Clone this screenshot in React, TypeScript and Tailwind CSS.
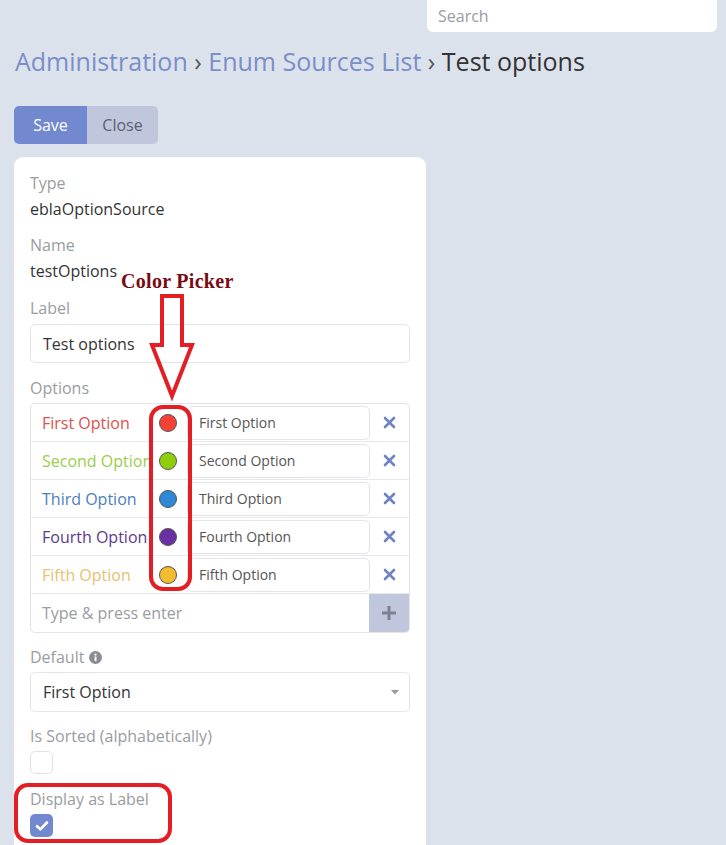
import React from "react";

const options = [
  { label: "First Option", text: "text-[#e0504f]", dot: "bg-[#f44336]" },
  { label: "Second Option", text: "text-[#9acd4a]", dot: "bg-[#8fce0c]" },
  { label: "Third Option", text: "text-[#4a80c0]", dot: "bg-[#2d88d6]" },
  { label: "Fourth Option", text: "text-[#5a3a90]", dot: "bg-[#6a2fa0]" },
  { label: "Fifth Option", text: "text-[#e8c070]", dot: "bg-[#f4bc2f]" },
];

function Label({ children }: { children: React.ReactNode }) {
  return <div className="text-[16px] leading-[22px] text-[#9a9ca1] mb-[4px]">{children}</div>;
}

export default function App() {
  return (
    <div
      className="relative w-[726px] h-[845px] overflow-hidden bg-[#dbe2ec]"
      style={{ fontFamily: '"Open Sans", sans-serif' }}
    >
      <div className="flex justify-end pr-[9px]">
        <div className="w-[290px] h-[32px] bg-white rounded-b-[6px] flex items-center pl-[11px] text-[16px] text-[#9a9ca1]">
          Search
        </div>
      </div>

      <div className="pl-[15px] mt-[13px] text-[25px] leading-[33px] text-[#333] whitespace-nowrap">
        <span className="text-[#7a8ec8]">Administration</span>
        <span className="text-[#555]"> › </span>
        <span className="text-[#7a8ec8]">Enum Sources List</span>
        <span className="text-[#555]"> › </span>
        <span>Test options</span>
      </div>

      <div className="pl-[14px] mt-[28px] flex">
        <div className="w-[73px] h-[38px] bg-[#7389cf] text-white text-[16px] flex items-center justify-center rounded-l-[5px]">
          Save
        </div>
        <div className="w-[71px] h-[38px] bg-[#c0c7dd] text-[#5c6170] text-[16px] flex items-center justify-center rounded-r-[5px]">
          Close
        </div>
      </div>

      <div className="ml-[14px] mt-[13px] w-[412px] h-[720px] bg-white rounded-[9px] pt-[15px] px-[16px]">
        <div className="mb-[14px]">
          <Label>Type</Label>
          <div className="text-[16px] leading-[22px] text-[#333]">eblaOptionSource</div>
        </div>
        <div className="mb-[15px]">
          <Label>Name</Label>
          <div className="text-[16px] leading-[22px] text-[#333]">testOptions</div>
        </div>
        <div className="mb-[14px]">
          <div className="text-[16px] leading-[22px] text-[#9a9ca1] mb-[5px]">Label</div>
          <div className="h-[39px] border border-[#e2e4ea] rounded-[5px] flex items-center pl-[12px] text-[16px] text-[#333]">
            Test options
          </div>
        </div>
        <div className="mb-[13px]">
          <Label>Options</Label>
          <div className="border border-[#e2e4ea] rounded-[5px] overflow-hidden">
            {options.map((o) => (
              <div key={o.label} className="h-[38px] flex items-center border-b border-[#e6e8ee]">
                <div className={`w-[118px] pl-[11px] whitespace-nowrap overflow-hidden text-[16px] ${o.text}`}>
                  {o.label}
                </div>
                <div className="w-[38px] flex justify-center">
                  <div className={`w-[18px] h-[18px] rounded-full border border-[#555] ${o.dot}`} />
                </div>
                <div className="w-[183px] h-[34px] border border-[#e2e4ea] rounded-[5px] flex items-center pl-[11px] text-[14px] text-[#555]">
                  {o.label}
                </div>
                <div className="flex-1 flex justify-center">
                  <svg width="13" height="13" viewBox="0 0 13 13">
                    <path d="M2 2 L11 11 M11 2 L2 11" stroke="#6f82c4" strokeWidth="2.6" strokeLinecap="round" />
                  </svg>
                </div>
              </div>
            ))}
            <div className="h-[38px] flex">
              <div className="flex-1 flex items-center pl-[11px] text-[16px] text-[#9a9ca1]">Type &amp; press enter</div>
              <div className="w-[40px] bg-[#c0c7dd] flex items-center justify-center">
                <svg width="16" height="16" viewBox="0 0 16 16">
                  <path d="M8 1 V15 M1 8 H15" stroke="#7d8290" strokeWidth="3" />
                </svg>
              </div>
            </div>
          </div>
        </div>
        <div className="mb-[13px]">
          <div className="flex items-center gap-[5px] text-[16px] leading-[22px] text-[#9a9ca1] mb-[4px]">
            Default
            <svg width="13" height="13" viewBox="0 0 13 13">
              <circle cx="6.5" cy="6.5" r="6.5" fill="#8a8d94" />
              <rect x="5.6" y="5.5" width="1.9" height="4.6" fill="white" />
              <circle cx="6.5" cy="3.6" r="1.1" fill="white" />
            </svg>
          </div>
          <div className="h-[40px] border border-[#e2e4ea] rounded-[5px] flex items-center justify-between pl-[12px] pr-[10px] text-[16px] text-[#333]">
            First Option
            <svg width="8" height="5" viewBox="0 0 8 5">
              <path d="M0 0 H8 L4 4.5 Z" fill="#999" />
            </svg>
          </div>
        </div>
        <div className="mb-[14px]">
          <Label>Is Sorted (alphabetically)</Label>
          <div className="w-[23px] h-[23px] border border-[#dfe2e8] rounded-[5px]" />
        </div>
        <div>
          <Label>Display as Label</Label>
          <div className="w-[23px] h-[23px] bg-[#7389cf] rounded-[5px] flex items-center justify-center">
            <svg width="14" height="12" viewBox="0 0 14 12">
              <path d="M2 6.2 L5.4 9.4 L12 2.5" stroke="white" strokeWidth="2.6" fill="none" strokeLinecap="round" strokeLinejoin="round" />
            </svg>
          </div>
        </div>
      </div>

      {/* Annotations */}
      <div
        className="absolute left-[121px] top-[270px] text-[20px] font-bold text-[#7a0a12] leading-[22px] tracking-[0.3px]"
        style={{ fontFamily: '"Liberation Serif", "DejaVu Serif", serif' }}
      >
        Color Picker
      </div>
      <svg className="absolute left-[148px] top-[292px]" width="50" height="110" viewBox="0 0 50 110">
        <path
          d="M14 4 H34 V53 H44 L24 104 L4 53 H14 Z"
          fill="none"
          stroke="#e31e24"
          strokeWidth="4"
          strokeLinejoin="miter"
        />
      </svg>
      <div className="absolute left-[149px] top-[405px] w-[43px] h-[186px] border-[4px] border-[#e31e24] rounded-[14px]" />
      <div className="absolute left-[14px] top-[783px] w-[158px] h-[60px] border-[4px] border-[#e31e24] rounded-[14px]" />
    </div>
  );
}
